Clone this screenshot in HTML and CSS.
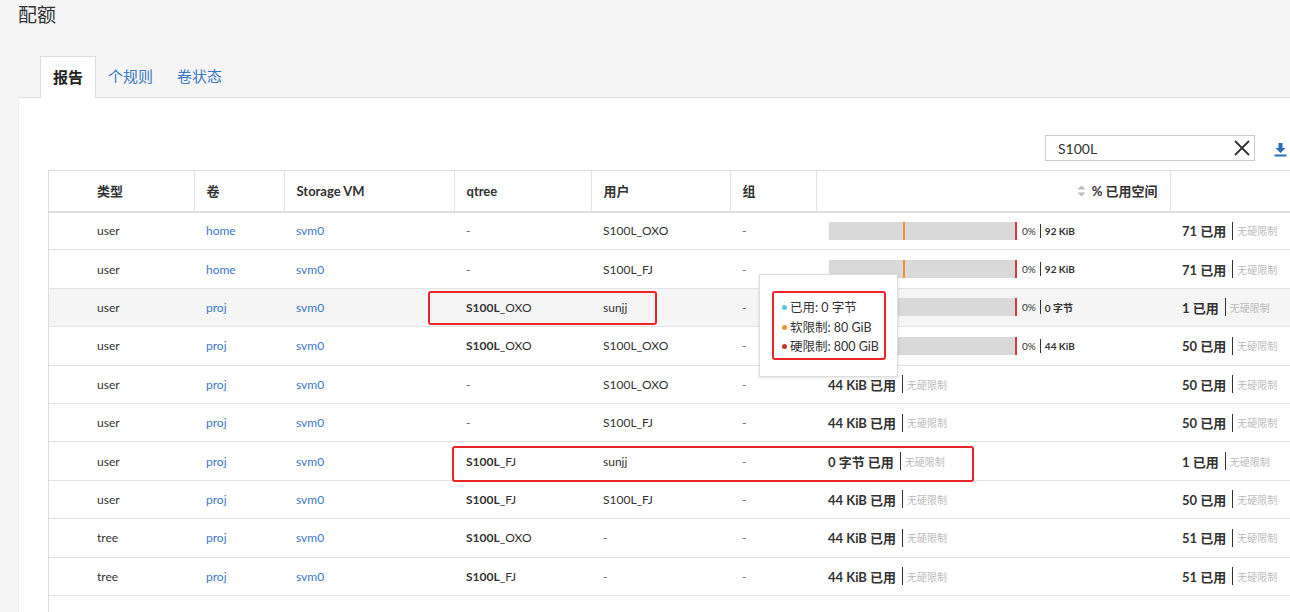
FILE: index.html
```html
<!DOCTYPE html>
<html lang="zh">
<head>
<meta charset="utf-8">
<link rel="stylesheet" href="styles.css">
</head>
<body>
<div class="page">
  <h1 class="title">配额</h1>
  <div class="tabs">
    <div class="tab active">报告</div>
    <div class="tab">个规则</div>
    <div class="tab">卷状态</div>
  </div>
  <div class="panel">
    <div class="toolbar">
      <div class="search">
        <span class="search-text">S100L</span>
        <svg class="clear" width="18" height="18" viewBox="0 0 18 18"><path d="M2 2 L16 16 M16 2 L2 16" stroke="#333" stroke-width="1.8" fill="none"/></svg>
      </div>
      <svg class="download" width="13" height="15" viewBox="0 0 13 15"><path d="M4.5 1 H8.5 V6 H11.5 L6.5 11 L1.5 6 H4.5 Z" fill="#2a6ebb"/><rect x="0.5" y="12.5" width="12" height="2" fill="#2a6ebb"/></svg>
    </div>
    <div class="table-wrap">
      <table class="grid">
        <thead>
          <tr>
            <th class="c1">类型</th>
            <th class="c2">卷</th>
            <th class="c3">Storage VM</th>
            <th class="c4">qtree</th>
            <th class="c5">用户</th>
            <th class="c6">组</th>
            <th class="c7 right"><span class="sort"><svg width="9" height="12" viewBox="0 0 9 12"><path d="M4.5 0.5 L8.5 4.5 H0.5 Z M4.5 11.5 L8.5 7.5 H0.5 Z" fill="#bbb"/></svg></span>% 已用空间</th>
            <th class="c8"></th>
          </tr>
        </thead>
        <tbody>
          <tr>
            <td class="c1">user</td><td><a>home</a></td><td><a>svm0</a></td><td class="dash">-</td><td>S100L_OXO</td><td class="dash">-</td>
            <td><div class="usage"><div class="bar"><i class="soft"></i><i class="hard"></i></div><span class="pct">0%</span><span class="sep"></span><span class="amt">92 KiB</span></div></td>
            <td><div class="used"><b>71 已用</b><span class="sep big"></span><span class="nolimit">无硬限制</span></div></td>
          </tr>
          <tr>
            <td class="c1">user</td><td><a>home</a></td><td><a>svm0</a></td><td class="dash">-</td><td>S100L_FJ</td><td class="dash">-</td>
            <td><div class="usage"><div class="bar"><i class="soft"></i><i class="hard"></i></div><span class="pct">0%</span><span class="sep"></span><span class="amt">92 KiB</span></div></td>
            <td><div class="used"><b>71 已用</b><span class="sep big"></span><span class="nolimit">无硬限制</span></div></td>
          </tr>
          <tr class="hover">
            <td class="c1">user</td><td><a>proj</a></td><td><a>svm0</a></td><td><b>S100L</b>_OXO</td><td>sunjj</td><td class="dash">-</td>
            <td><div class="usage"><div class="bar"><i class="hard"></i></div><span class="pct">0%</span><span class="sep"></span><span class="amt">0 字节</span></div></td>
            <td><div class="used"><b>1 已用</b><span class="sep big"></span><span class="nolimit">无硬限制</span></div></td>
          </tr>
          <tr>
            <td class="c1">user</td><td><a>proj</a></td><td><a>svm0</a></td><td><b>S100L</b>_OXO</td><td>S100L_OXO</td><td class="dash">-</td>
            <td><div class="usage"><div class="bar"><i class="hard"></i></div><span class="pct">0%</span><span class="sep"></span><span class="amt">44 KiB</span></div></td>
            <td><div class="used"><b>50 已用</b><span class="sep big"></span><span class="nolimit">无硬限制</span></div></td>
          </tr>
          <tr>
            <td class="c1">user</td><td><a>proj</a></td><td><a>svm0</a></td><td class="dash">-</td><td>S100L_OXO</td><td class="dash">-</td>
            <td><div class="used"><b>44 KiB 已用</b><span class="sep big"></span><span class="nolimit">无硬限制</span></div></td>
            <td><div class="used"><b>50 已用</b><span class="sep big"></span><span class="nolimit">无硬限制</span></div></td>
          </tr>
          <tr>
            <td class="c1">user</td><td><a>proj</a></td><td><a>svm0</a></td><td class="dash">-</td><td>S100L_FJ</td><td class="dash">-</td>
            <td><div class="used"><b>44 KiB 已用</b><span class="sep big"></span><span class="nolimit">无硬限制</span></div></td>
            <td><div class="used"><b>50 已用</b><span class="sep big"></span><span class="nolimit">无硬限制</span></div></td>
          </tr>
          <tr>
            <td class="c1">user</td><td><a>proj</a></td><td><a>svm0</a></td><td><b>S100L</b>_FJ</td><td>sunjj</td><td class="dash">-</td>
            <td><div class="used"><b>0 字节 已用</b><span class="sep big"></span><span class="nolimit">无硬限制</span></div></td>
            <td><div class="used"><b>1 已用</b><span class="sep big"></span><span class="nolimit">无硬限制</span></div></td>
          </tr>
          <tr>
            <td class="c1">user</td><td><a>proj</a></td><td><a>svm0</a></td><td><b>S100L</b>_FJ</td><td>S100L_FJ</td><td class="dash">-</td>
            <td><div class="used"><b>44 KiB 已用</b><span class="sep big"></span><span class="nolimit">无硬限制</span></div></td>
            <td><div class="used"><b>50 已用</b><span class="sep big"></span><span class="nolimit">无硬限制</span></div></td>
          </tr>
          <tr>
            <td class="c1">tree</td><td><a>proj</a></td><td><a>svm0</a></td><td><b>S100L</b>_OXO</td><td class="dash">-</td><td class="dash">-</td>
            <td><div class="used"><b>44 KiB 已用</b><span class="sep big"></span><span class="nolimit">无硬限制</span></div></td>
            <td><div class="used"><b>51 已用</b><span class="sep big"></span><span class="nolimit">无硬限制</span></div></td>
          </tr>
          <tr>
            <td class="c1">tree</td><td><a>proj</a></td><td><a>svm0</a></td><td><b>S100L</b>_FJ</td><td class="dash">-</td><td class="dash">-</td>
            <td><div class="used"><b>44 KiB 已用</b><span class="sep big"></span><span class="nolimit">无硬限制</span></div></td>
            <td><div class="used"><b>51 已用</b><span class="sep big"></span><span class="nolimit">无硬限制</span></div></td>
          </tr>
        </tbody>
      </table>
    </div>
    <div class="tooltip">
      <div class="tip-line"><span class="dot cyan"></span>已用: 0 字节</div>
      <div class="tip-line"><span class="dot orange"></span>软限制: 80 GiB</div>
      <div class="tip-line"><span class="dot red"></span>硬限制: 800 GiB</div>
    </div>
    <div class="mark mark-tip"></div>
    <div class="mark mark-a"></div>
    <div class="mark mark-b"></div>
  </div>
</div>
</body>
</html>
```

FILE: styles.css
```css
html, body {
  margin: 0;
  padding: 0;
  background: #f5f5f5;
  font-family: Lato, "Noto Sans CJK SC", sans-serif;
  color: #333;
  overflow: hidden;
}
.page {
  width: 1290px;
  height: 612px;
  overflow: hidden;
}
.title {
  margin: 0;
  padding: 3px 0 0 18px;
  height: 56px;
  box-sizing: border-box;
  font-size: 19px;
  font-weight: normal;
  color: #333;
  line-height: 24px;
}
.tabs {
  display: flex;
  padding-left: 40px;
  height: 41px;
  position: relative;
  z-index: 1;
}
.tab {
  font-size: 15px;
  line-height: 40px;
  padding: 0 12px;
  color: #3c78c3;
}
.tab.active {
  background: #fff;
  color: #222;
  font-weight: bold;
  border: 1px solid #ddd;
  border-bottom: none;
  height: 42px;
  box-sizing: border-box;
}
.panel {
  position: relative;
  margin-left: 18px;
  background: #fff;
  border-top: 1px solid #ddd;
  border-left: 1px solid #eee;
  height: 520px;
  box-sizing: border-box;
  overflow: hidden;
}
.toolbar {
  display: flex;
  justify-content: flex-end;
  align-items: center;
  padding: 37px 3px 0 0;
  height: 26px;
  gap: 19px;
}
.search {
  width: 210px;
  height: 26px;
  box-sizing: border-box;
  border: 1px solid #ccc;
  display: flex;
  align-items: center;
  justify-content: space-between;
  padding: 0 3px 0 12px;
}
.search-text {
  font-size: 14px;
  color: #333;
}
.download {
  margin-top: 2px;
}
.table-wrap {
  margin: 9px 0 0 29px;
  border-left: 1px solid #ddd;
  height: 500px;
}
.grid {
  border-collapse: collapse;
  width: 1301px;
  table-layout: fixed;
}
.grid th,
.grid td {
  box-sizing: border-box;
}
.grid th {
  height: 41px;
  padding: 0 12px;
  font-size: 13px;
  font-weight: bold;
  text-align: left;
  color: #333;
  border-top: 1px solid #ddd;
  border-left: 1px solid #e3e3e3;
  border-bottom: 2px solid #ddd;
}
.grid th:first-child {
  border-left: none;
}
.grid th.c1 {
  text-align: left;
  padding-left: 48px;
}
.grid th.right {
  text-align: right;
}
.sort {
  display: inline-block;
  vertical-align: -1px;
  margin-right: 6px;
}
.c1 { width: 145px; }
.c2 { width: 90px; }
.c3 { width: 170px; }
.c4 { width: 137px; }
.c5 { width: 139px; }
.c6 { width: 86px; }
.c7 { width: 354px; }
.c8 { width: 180px; }
.grid td {
  height: 38.4px;
  padding: 0 12px;
  font-size: 12px;
  color: #333;
  border-bottom: 1px solid #e3e3e3;
  white-space: nowrap;
}
.grid td.c1 {
  padding-left: 48px;
}
.grid td.dash {
  color: #666;
}
.grid tr.hover td {
  background: #f5f5f5;
}
.grid a {
  color: #3c78c3;
}
.usage {
  display: flex;
  align-items: center;
}
.bar {
  position: relative;
  width: 188px;
  height: 18px;
  background: #d9d9d9;
  margin-left: 1px;
}
.bar .soft {
  position: absolute;
  left: 74px;
  top: 0;
  width: 2px;
  height: 18px;
  background: #f0922e;
}
.bar .hard {
  position: absolute;
  right: 0;
  top: 0;
  width: 2px;
  height: 18px;
  background: #d9363e;
}
.pct {
  font-size: 10px;
  margin-left: 5px;
}
.amt {
  font-size: 10px;
  font-weight: bold;
}
.sep {
  display: inline-block;
  width: 1px;
  height: 14px;
  background: #333;
  margin: 0 4px;
}
.sep.big {
  height: 18px;
  margin: 0 4px 0 6px;
}
.used {
  display: flex;
  align-items: center;
}
.used b {
  font-size: 13px;
}
.nolimit {
  font-size: 10px;
  color: #bbb;
}
.tooltip {
  position: absolute;
  left: 740px;
  top: 176px;
  width: 139px;
  height: 103px;
  box-sizing: border-box;
  background: #fff;
  border: 1px solid #ddd;
  box-shadow: 0 1px 3px rgba(0,0,0,0.12);
  padding: 23px 0 0 22px;
  z-index: 2;
}
.tip-line {
  font-size: 12.5px;
  line-height: 19.5px;
  color: #333;
  display: flex;
  align-items: center;
  white-space: nowrap;
}
.dot {
  display: inline-block;
  width: 5px;
  height: 5px;
  border-radius: 50%;
  margin-right: 3px;
}
.dot.cyan { background: #5bc8de; }
.dot.orange { background: #f0922e; }
.dot.red { background: #c9302c; }
.mark {
  position: absolute;
  border: 2px solid #e8262a;
  border-radius: 3px;
  box-sizing: border-box;
  z-index: 3;
}
.mark-tip {
  left: 753px;
  top: 193px;
  width: 114px;
  height: 69px;
}
.mark-a {
  left: 409px;
  top: 193px;
  width: 229px;
  height: 34px;
}
.mark-b {
  left: 433px;
  top: 348px;
  width: 522px;
  height: 36px;
}
```
